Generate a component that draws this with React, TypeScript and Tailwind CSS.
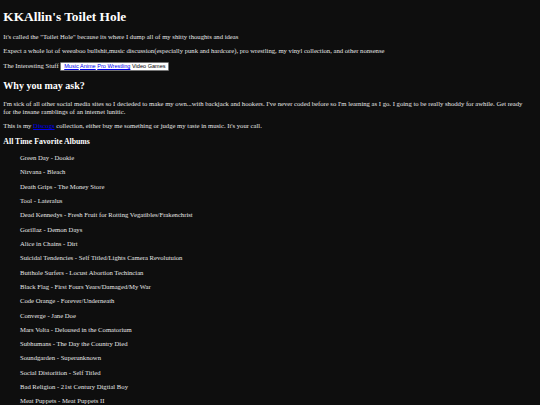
import React from "react";

const albums = [
  "Green Day - Dookie",
  "Nirvana - Bleach",
  "Death Grips - The Money Store",
  "Tool - Lateralus",
  "Dead Kennedys - Fresh Fruit for Rotting Vegatibles/Frakenchrist",
  "Gorillaz - Demon Days",
  "Alice in Chains - Dirt",
  "Suicidal Tendencies - Self Titled/Lights Camera Revolutuion",
  "Butthole Surfers - Locust Abortion Techincian",
  "Black Flag - First Fours Years/Damaged/My War",
  "Code Orange - Forever/Underneath",
  "Converge - Jane Doe",
  "Mars Volta - Deloused in the Comatorium",
  "Subhumans - The Day the Country Died",
  "Soundgarden - Superunknown",
  "Social Distorition - Self Titled",
  "Bad Religion - 21st Century Digtial Boy",
  "Meat Puppets - Meat Puppets II",
  "Minor Threat - Complete Discography",
];

export default function App() {
  return (
    <div className="min-h-screen w-full overflow-hidden bg-[#0e0e0e] text-[#e6e6e6] font-['Liberation_Serif',serif] pl-[3.33px] pr-[10px] pt-[8.93px]">
      <h1 className="text-[13.33px] leading-[15.3px] font-bold text-white">KKAllin's Toilet Hole</h1>
      <p className="mt-[8.93px] text-[6.67px] leading-[7.66px]">
        It's called the "Toilet Hole" because its where I dump all of my shitty thoughts and ideas
      </p>
      <p className="mt-[6.67px] text-[6.67px] leading-[7.66px]">
        Expect a whole lot of weeaboo bullshit,music discussion(especially punk and hardcore), pro wrestling, my vinyl collection, and other nonsense
      </p>
      <p className="mt-[6.67px] text-[6.67px] leading-[7.66px]">
        The Interesting Stuff{" "}
        <span className="inline-block bg-white border-[0.83px] border-[#767676] rounded-[1px] px-[2.9px] py-[0.4px] font-['Liberation_Sans',Arial,sans-serif] text-[5.55px] leading-[6.4px] text-black align-baseline">
          <a href="#" className="text-[#0000ee] underline">Music</a>{" "}
          <a href="#" className="text-[#0000ee] underline">Anime</a>{" "}
          <a href="#" className="text-[#0000ee] underline">Pro Wrestling</a>{" "}
          <span>Video Games</span>
        </span>
      </p>
      <h2 className="mt-[9.3px] text-[10px] leading-[11.5px] font-bold text-white">Why you may ask?</h2>
      <p className="mt-[8.3px] text-[6.67px] leading-[7.66px]">
        I'm sick of all other social media sites so I decieded to make my own...with backjack and hookers. I've never coded before so I'm learning as I go. I going to be really shoddy for awhile. Get ready for the insane ramblings of an internet lunitic.
      </p>
      <p className="mt-[6.67px] text-[6.67px] leading-[7.66px]">
        This is my <a href="#" className="text-[#0000ee] underline">Discogs</a> collection, either buy me something or judge my taste in music. It's your call.
      </p>
      <h3 className="mt-[8.8px] text-[7.8px] leading-[8.96px] font-bold text-white">All Time Favorite Albums</h3>
      <div className="ml-[16.67px] mt-[2.13px]">
        {albums.map((a) => (
          <p key={a} className="mt-[6.67px] text-[6.67px] leading-[7.66px]">{a}</p>
        ))}
      </div>
    </div>
  );
}
